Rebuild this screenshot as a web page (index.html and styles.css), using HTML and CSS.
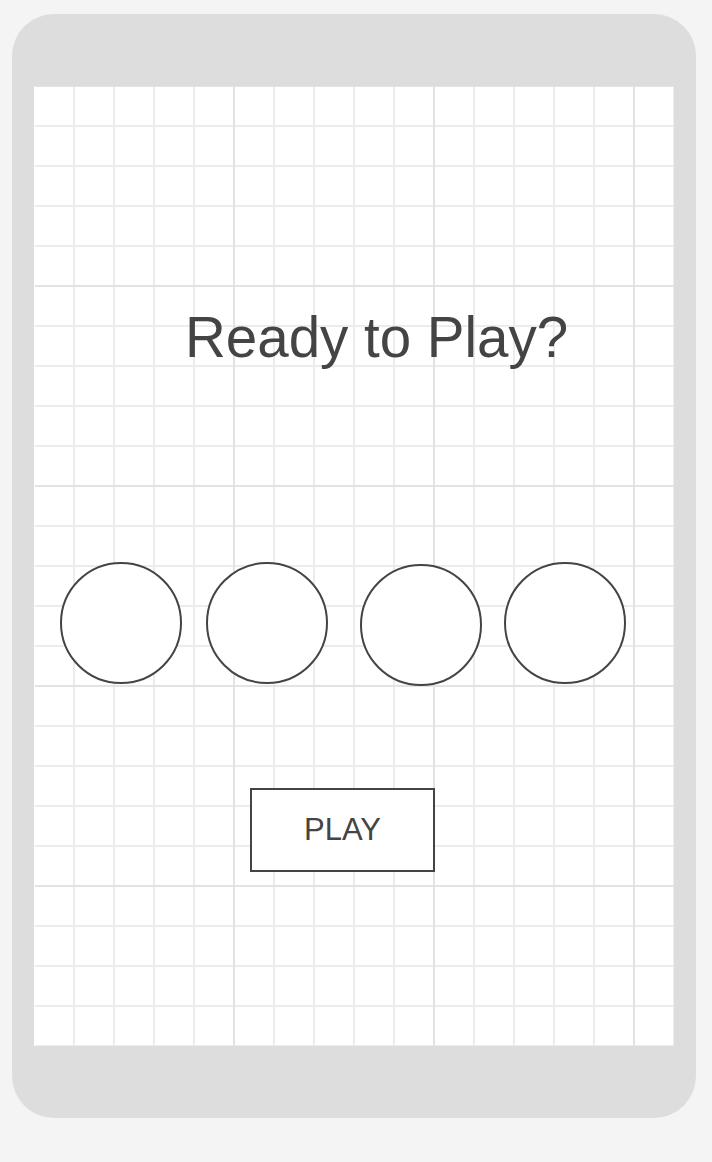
FILE: index.html
```html
<!DOCTYPE html>
<html lang="en">
<head>
<meta charset="utf-8">
<title>Ready to Play?</title>
<link rel="stylesheet" href="styles.css">
</head>
<body>
<div class="device">
  <main class="screen">
    <h1 class="title">Ready to Play?</h1>
    <div class="slots">
      <div class="slot slot-1"></div>
      <div class="slot slot-2"></div>
      <div class="slot slot-3"></div>
      <div class="slot slot-4"></div>
    </div>
    <button class="play" type="button">PLAY</button>
  </main>
</div>
</body>
</html>
```

FILE: styles.css
```css
html, body {
  margin: 0;
  padding: 0;
  background: #f4f4f4;
}

body {
  font-family: "Liberation Sans", Arial, sans-serif;
  color: #444;
}

.device {
  box-sizing: border-box;
  width: 684px;
  height: 1104px;
  margin: 14px 0 0 12px;
  padding: 72px 22px;
  background: #dddddd;
  border-radius: 42px;
}

.screen {
  box-sizing: border-box;
  width: 640px;
  height: 960px;
  display: flex;
  flex-direction: column;
  align-items: flex-start;
  background-color: #ffffff;
  background-image:
    linear-gradient(to right, #ffffff 1px, transparent 1px),
    linear-gradient(to right, #e3e3e3 2px, transparent 2px),
    linear-gradient(to bottom, #e3e3e3 2px, transparent 2px),
    linear-gradient(to right, #ececec 2px, transparent 2px),
    linear-gradient(to bottom, #ececec 2px, transparent 2px);
  background-repeat: no-repeat, repeat, repeat, repeat, repeat;
  background-size: 100% 100%, 200px 200px, 200px 200px, 40px 40px, 40px 40px;
  background-position: 0 0, 199px 0, 0 199px, 39px 0, 0 39px;
}

.title {
  margin: 224px 0 0 151px;
  font-size: 56.5px;
  line-height: 56px;
  font-weight: normal;
  color: #444;
  white-space: nowrap;
}

.slots {
  display: flex;
  align-items: flex-start;
  margin-top: 196px;
  padding-left: 26px;
}

.slot {
  box-sizing: border-box;
  width: 122px;
  height: 122px;
  border: 2px solid #444;
  border-radius: 50%;
  background: #ffffff;
}

.slot-2 { margin-left: 24px; }
.slot-3 { margin-left: 32px; margin-top: 2px; }
.slot-4 { margin-left: 22px; }

.play {
  box-sizing: border-box;
  width: 185px;
  height: 84px;
  margin: 102px 0 0 216px;
  padding: 0;
  display: flex;
  align-items: center;
  justify-content: center;
  border: 2px solid #444;
  border-radius: 0;
  background: #ffffff;
  font-family: "Liberation Sans", Arial, sans-serif;
  font-size: 31px;
  color: #444;
  cursor: pointer;
}
```
